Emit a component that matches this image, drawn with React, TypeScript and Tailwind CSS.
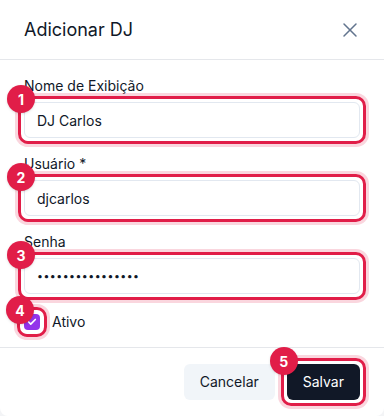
import { X, Check } from 'lucide-react';
import type { ReactNode } from 'react';

function Marker({ n, children, wide = false }: { n: number; children: ReactNode; wide?: boolean }) {
  return (
    <div className="relative">
      {children}
      <div
        className={`pointer-events-none absolute ${wide ? '-inset-[7px]' : '-inset-[6px]'} rounded-[10px] border-[3px] border-[#e11d48] shadow-[0_0_0_3px_rgba(225,29,72,0.18)]`}
      />
      <div
        className={`absolute ${wide ? '-left-[18px] -top-[18px]' : '-left-[17px] -top-[17px]'} flex h-7 w-7 items-center justify-center rounded-full bg-[#e11d48] text-[14px] font-bold text-white shadow-sm`}
      >
        {n}
      </div>
    </div>
  );
}

function Field({
  label,
  value,
  n,
  type = 'text',
}: {
  label: string;
  value: string;
  n: number;
  type?: string;
}) {
  return (
    <div>
      <label className="mb-1.5 block text-sm leading-5 text-gray-900">{label}</label>
      <Marker n={n}>
        <input
          type={type}
          readOnly
          value={value}
          className={`block h-9 w-full rounded-md border border-slate-200 bg-white px-3 text-gray-900 outline-none ${
            type === 'password' ? 'text-[10.5px] tracking-[0.5px]' : 'text-sm'
          }`}
        />
      </Marker>
    </div>
  );
}

export default function App() {
  return (
    <div className="h-[416px] bg-gray-100" style={{ fontFamily: 'Inter, "Noto Sans", sans-serif' }}>
      <div className="rounded-b-lg bg-white">
        {/* Header */}
        <div className="flex h-[60px] items-center justify-between border-b border-gray-200 pl-6 pr-[22px]">
          <h2 className="text-lg text-gray-900">Adicionar DJ</h2>
          <button className="text-slate-500">
            <X size={24} strokeWidth={1.5} />
          </button>
        </div>

        {/* Body */}
        <div className="space-y-4 px-6 pb-[13px] pt-4">
          <Field n={1} label="Nome de Exibição" value="DJ Carlos" />
          <Field n={2} label="Usuário *" value="djcarlos" />
          <Field n={3} label="Senha" value="senhasecreta1234" type="password" />
          <div className="flex h-6 items-center gap-3">
            <Marker n={4} wide>
              <div className="flex h-4 w-4 items-center justify-center rounded bg-[#9333ea]">
                <Check size={10} strokeWidth={4} className="text-white" />
              </div>
            </Marker>
            <span className="text-sm text-gray-900">Ativo</span>
          </div>
        </div>

        {/* Footer */}
        <div className="flex justify-end gap-3 border-t border-gray-200 px-6 pb-4 pt-4">
          <button className="h-9 rounded-md bg-slate-100 px-4 text-sm text-gray-900">Cancelar</button>
          <Marker n={5}>
            <button className="h-9 rounded-md bg-[#111827] px-4 text-sm text-white">Salvar</button>
          </Marker>
        </div>
      </div>
    </div>
  );
}
